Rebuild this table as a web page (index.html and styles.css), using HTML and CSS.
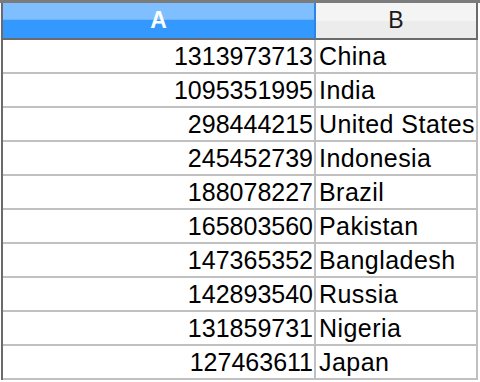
FILE: index.html
```html
<!DOCTYPE html>
<html>
<head>
<meta charset="utf-8">
<link rel="stylesheet" href="styles.css">
</head>
<body>
<div class="topbar"></div>
<div class="sheet">
  <div class="row head">
    <div class="cell hA">A</div>
    <div class="cell hB">B</div>
  </div>
  <div class="row"><div class="cell num">1313973713</div><div class="cell txt">China</div></div>
  <div class="row"><div class="cell num">1095351995</div><div class="cell txt">India</div></div>
  <div class="row"><div class="cell num">298444215</div><div class="cell txt">United States</div></div>
  <div class="row"><div class="cell num">245452739</div><div class="cell txt">Indonesia</div></div>
  <div class="row"><div class="cell num">188078227</div><div class="cell txt">Brazil</div></div>
  <div class="row"><div class="cell num">165803560</div><div class="cell txt">Pakistan</div></div>
  <div class="row"><div class="cell num">147365352</div><div class="cell txt">Bangladesh</div></div>
  <div class="row"><div class="cell num">142893540</div><div class="cell txt">Russia</div></div>
  <div class="row"><div class="cell num">131859731</div><div class="cell txt">Nigeria</div></div>
  <div class="row"><div class="cell num">127463611</div><div class="cell txt">Japan</div></div>
</div>
</body>
</html>
```
FILE: styles.css
```css
html, body {
  margin: 0;
  padding: 0;
  background: #ffffff;
}
body {
  width: 480px;
  height: 382px;
  overflow: hidden;
  font-family: "Liberation Sans", Arial, sans-serif;
}
.topbar {
  height: 3px;
  background: #7b7b7b;
}
.sheet {
  margin-left: 1px;
  border-left: 2px solid #6a6a6a;
  width: 475px;
}
.row {
  display: flex;
  height: 34px;
}
.cell {
  box-sizing: border-box;
  height: 100%;
  border-right: 2px solid #c0c0c0;
  border-bottom: 2px solid #c0c0c0;
  font-size: 25px;
  line-height: 32px;
  color: #000000;
  white-space: nowrap;
  overflow: hidden;
}
.cell:first-child {
  width: 313px;
}
.cell:last-child {
  width: 162px;
}
.num {
  text-align: right;
  padding-right: 1px;
}
.txt {
  padding-left: 3px;
  letter-spacing: 0.45px;
}
.head {
  height: 37px;
}
.head .cell {
  text-align: center;
  line-height: 35px;
  font-size: 23px;
  border-bottom-color: #6b6b6b;
}
.hA {
  background: linear-gradient(to bottom, #80bfff 0, #80bfff 16px, #6cb4ff 16px, #6cb4ff 17px, #3399ff 17px, #3399ff 100%);
  color: #ffffff;
  font-weight: bold;
  border-right-color: #2a86e6 !important;
}
.hB {
  background: linear-gradient(to bottom, #f4f4f4 0, #f4f4f4 18px, #ececec 18px, #ececec 100%);
  color: #1a1a1a;
  border-right-color: #6b6b6b !important;
}
```
